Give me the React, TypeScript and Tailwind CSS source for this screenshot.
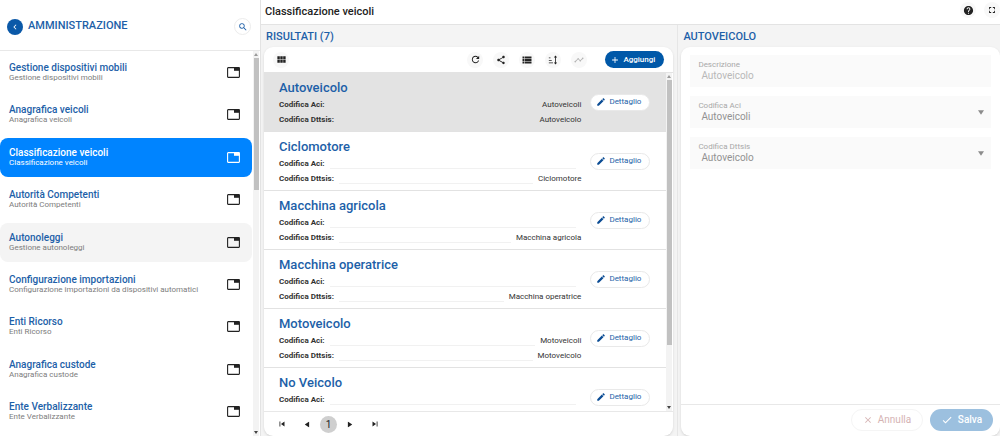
import { useState } from "react";
import type { ReactNode } from "react";
import {
  MdAdd,
  MdCheck,
  MdChevronLeft,
  MdClose,
  MdEdit,
  MdFullscreen,
  MdHelp,
  MdRefresh,
  MdSearch,
  MdShare,
  MdSkipNext,
  MdSkipPrevious,
  MdTimeline,
  MdViewList,
  MdViewModule,
} from "react-icons/md";

type MenuItem = { title: string; subtitle: string };
type Vehicle = { name: string; aci: string; dttsis?: string };

const menuItems: MenuItem[] = [
  { title: "Gestione dispositivi mobili", subtitle: "Gestione dispositivi mobili" },
  { title: "Anagrafica veicoli", subtitle: "Anagrafica veicoli" },
  { title: "Classificazione veicoli", subtitle: "Classificazione veicoli" },
  { title: "Autorità Competenti", subtitle: "Autorità Competenti" },
  { title: "Autonoleggi", subtitle: "Gestione autonoleggi" },
  {
    title: "Configurazione importazioni",
    subtitle: "Configurazione importazioni da dispositivi automatici",
  },
  { title: "Enti Ricorso", subtitle: "Enti Ricorso" },
  { title: "Anagrafica custode", subtitle: "Anagrafica custode" },
  { title: "Ente Verbalizzante", subtitle: "Ente Verbalizzante" },
];

const vehicles: Vehicle[] = [
  { name: "Autoveicolo", aci: "Autoveicoli", dttsis: "Autoveicolo" },
  { name: "Ciclomotore", aci: "", dttsis: "Ciclomotore" },
  { name: "Macchina agricola", aci: "", dttsis: "Macchina agricola" },
  { name: "Macchina operatrice", aci: "", dttsis: "Macchina operatrice" },
  { name: "Motoveicolo", aci: "Motoveicoli", dttsis: "Motoveicolo" },
  { name: "No Veicolo", aci: "" },
];

const Triangle = ({ className }: { className: string }) => (
  <svg viewBox="0 0 8 6" className={className} aria-hidden="true">
    <path d="M0 0h8L4 6z" fill="currentColor" />
  </svg>
);

const TabIcon = ({ className }: { className: string }) => (
  <svg viewBox="0 0 13 11" className={`w-[13px] h-[11px] ${className}`} aria-hidden="true">
    <rect x="0.6" y="0.6" width="11.8" height="9.8" rx="0.6" fill="none" stroke="currentColor" strokeWidth="1.1" />
    <path d="M7 0.6h5.4v3.2H7z" fill="currentColor" />
  </svg>
);

const SortIcon = () => (
  <svg viewBox="0 0 24 24" className="size-[10px]" aria-hidden="true">
    <path d="M2 6h4v2H2zM2 12h7v2H2zM2 18h10v2H2z" fill="currentColor" />
    <path d="M18 1l4 5h-3v12h3l-4 5-4-5h3V6h-3z" fill="currentColor" />
  </svg>
);

const RoundButton = ({
  label,
  disabled,
  children,
}: {
  label: string;
  disabled?: boolean;
  children: ReactNode;
}) => (
  <button
    aria-label={label}
    disabled={disabled}
    className="size-4 rounded-full bg-[#f8f8f8] flex items-center justify-center text-[#222] disabled:text-[#b5b5b5]"
  >
    {children}
  </button>
);

const ScrollTrack = ({ thumb }: { thumb: string }) => (
  <div className="w-[6px] shrink-0 bg-[#f3f3f3] flex flex-col items-center pt-[2px]">
    <Triangle className="w-1 h-[3px] shrink-0 rotate-180 text-[#9a9a9a]" />
    <div className={`w-[5px] mt-[2px] bg-[#c1c1c1] ${thumb}`} />
    <Triangle className="w-1 h-[3px] shrink-0 mt-auto mb-[2px] text-[#444]" />
  </div>
);

const Sidebar = () => {
  const [active, setActive] = useState("Classificazione veicoli");

  return (
    <aside className="w-[260px] shrink-0 h-full flex flex-col bg-white">
      <div className="h-[51px] shrink-0 pt-[3px] pl-[7px] pr-[9px] flex items-center border-b border-[#e8e8e8]">
        <button
          aria-label="Indietro"
          className="size-4 rounded-full bg-[#0b59a8] text-white flex items-center justify-center"
        >
          <MdChevronLeft className="size-[10px]" />
        </button>
        <h1 className="ml-[5px] text-[11px] font-medium text-[#1d5fa8]">AMMINISTRAZIONE</h1>
        <button
          aria-label="Cerca"
          className="ml-auto size-[17px] rounded-full border border-[#ececec] text-[#1d5fa8] flex items-center justify-center"
        >
          <MdSearch className="size-[10px]" />
        </button>
      </div>
      <div className="flex-1 min-h-0 flex">
        <nav className="flex-1 pt-[2px] pb-[5px] flex flex-col justify-between">
          {menuItems.map((item) => {
            const selected = item.title === active;
            return (
              <button
                key={item.title}
                onClick={() => setActive(item.title)}
                className={`h-[39px] mr-px pl-[9px] pr-3 rounded-lg flex items-center justify-between text-left ${
                  selected ? "bg-[#0084ff]" : item.title === "Autonoleggi" ? "bg-[#f4f4f4]" : ""
                }`}
              >
                <span className="flex flex-col">
                  <span
                    className={`text-[10px] leading-[11px] font-medium ${selected ? "text-white" : "text-[#1d5fa8]"}`}
                  >
                    {item.title}
                  </span>
                  <span
                    className={`text-[8px] leading-[10px] ${selected ? "text-white" : "text-[#7d7d7d]"}`}
                  >
                    {item.subtitle}
                  </span>
                </span>
                <TabIcon className={selected ? "text-white" : "text-[#222]"} />
              </button>
            );
          })}
        </nav>
        <ScrollTrack thumb="h-[132px]" />
        <div className="w-px" />
      </div>
    </aside>
  );
};

const VehicleField = ({ label, value }: { label: string; value: string }) => (
  <div className="h-[15px] flex items-center gap-[5px]">
    <dt className="text-[8px] font-bold text-[#333]">{label}:</dt>
    <div className="flex-1 h-[11px] border-b border-[#f1f1f1]" />
    <dd className="text-[8px] text-[#333]">{value}</dd>
  </div>
);

const VehicleRow = ({ vehicle, selected }: { vehicle: Vehicle; selected: boolean }) => (
  <li
    className={`h-[59px] shrink-0 pl-[15px] pr-4 flex border-b border-[#e2e2e2] ${
      selected ? "bg-[#e3e3e3]" : ""
    }`}
  >
    <div className={`flex-1 pt-[6px] ${selected ? "[&_div]:border-transparent" : ""}`}>
      <h3 className="text-[13px] leading-[18px] font-medium text-[#1d5fa8]">{vehicle.name}</h3>
      <dl>
        <VehicleField label="Codifica Aci" value={vehicle.aci} />
        {vehicle.dttsis !== undefined && (
          <VehicleField label="Codifica Dttsis" value={vehicle.dttsis} />
        )}
      </dl>
    </div>
    <button className="ml-[9px] self-center w-[60px] h-[17px] rounded-full bg-white border border-[#e9e9e9] flex items-center pl-[5px] gap-[3px] text-[8px] text-[#1d5fa8]">
      <MdEdit className="size-[10px] text-[#0b4c94]" />
      Dettaglio
    </button>
  </li>
);

const Results = () => (
  <section className="flex-[415_1_0%] pl-[3px] pr-1 flex flex-col min-h-0">
    <h2 className="h-[22px] shrink-0 px-[2px] pt-[2px] flex items-center text-[11px] font-medium text-[#1d5fa8]">
      RISULTATI (7)
    </h2>
    <div className="flex-1 min-h-0 flex flex-col bg-white rounded-[9px] overflow-hidden shadow-sm">
      <div className="h-[25px] shrink-0 px-[9px] flex items-center">
        <RoundButton label="Griglia">
          <MdViewModule className="size-[11px]" />
        </RoundButton>
        <div className="ml-auto mr-[18px] flex gap-[10px]">
          <RoundButton label="Aggiorna">
            <MdRefresh className="size-[11px]" />
          </RoundButton>
          <RoundButton label="Condividi">
            <MdShare className="size-[10px]" />
          </RoundButton>
          <RoundButton label="Elenco">
            <MdViewList className="size-3" />
          </RoundButton>
          <RoundButton label="Ordina">
            <SortIcon />
          </RoundButton>
          <RoundButton label="Grafico" disabled>
            <MdTimeline className="size-[10px]" />
          </RoundButton>
        </div>
        <button className="w-[59px] h-[17px] rounded-full bg-[#0058a8] text-white text-[8px] font-medium flex items-center pl-[5px] gap-[3px]">
          <MdAdd className="size-[10px]" />
          Aggiungi
        </button>
      </div>
      <div className="flex-1 min-h-0 flex border-t border-[#e3e3e3]">
        <ul className="flex-1 flex flex-col overflow-hidden">
          {vehicles.map((vehicle, i) => (
            <VehicleRow key={vehicle.name} vehicle={vehicle} selected={i === 0} />
          ))}
        </ul>
        <ScrollTrack thumb="h-[265px]" />
        <div className="w-px" />
      </div>
      <div className="h-[25px] shrink-0 pl-[13px] flex items-center border-t border-[#e8e8e8] text-[#222]">
        <button aria-label="Prima pagina">
          <MdSkipPrevious className="size-[10px]" />
        </button>
        <button aria-label="Pagina precedente" className="ml-[17px]">
          <Triangle className="w-[6px] h-[5px] rotate-90" />
        </button>
        <button className="ml-[10px] size-[17px] rounded-full bg-[#cfcfcf] text-[10px]">1</button>
        <button aria-label="Pagina successiva" className="ml-[10px]">
          <Triangle className="w-[6px] h-[5px] -rotate-90" />
        </button>
        <button aria-label="Ultima pagina" className="ml-[17px]">
          <MdSkipNext className="size-[10px]" />
        </button>
      </div>
    </div>
  </section>
);

const SelectField = ({ id, label, value }: { id: string; label: string; value: string }) => (
  <div className="h-8 pl-[8px] pr-[7px] bg-[#fafafa] flex items-center">
    <div className="flex-1 flex flex-col">
      <label htmlFor={id} className="text-[8px] leading-[10px] text-[#a8a8a8]">
        {label}
      </label>
      <select
        id={id}
        disabled
        defaultValue={value}
        className="appearance-none pl-[3px] text-[10px] leading-[12px] text-[#929292] opacity-100"
      >
        <option>{value}</option>
      </select>
    </div>
    <Triangle className="w-[6px] h-[5px] text-[#8c8c8c]" />
  </div>
);

const Detail = () => (
  <section className="flex-[323_1_0%] pl-[3px] border-l border-[#e6e6e6] flex flex-col min-h-0">
    <h2 className="h-[22px] shrink-0 px-[2px] pt-[2px] flex items-center text-[11px] font-medium text-[#1d5fa8]">
      AUTOVEICOLO
    </h2>
    <div className="flex-1 min-h-0 flex flex-col bg-white rounded-[9px] shadow-sm">
      <form className="flex-1 pt-2 px-[9px] flex flex-col gap-[9px]">
        <div className="h-8 px-[8px] bg-[#fafafa] flex flex-col justify-center">
          <label htmlFor="descrizione" className="text-[8px] leading-[10px] text-[#a8a8a8]">
            Descrizione
          </label>
          <input
            id="descrizione"
            disabled
            defaultValue="Autoveicolo"
            className="pl-[3px] text-[10px] leading-[12px] text-[#b8b8b8]"
          />
        </div>
        <SelectField id="aci" label="Codifica Aci" value="Autoveicoli" />
        <SelectField id="dttsis" label="Codifica Dttsis" value="Autoveicolo" />
      </form>
      <div className="h-8 shrink-0 pr-[7px] pb-[2px] flex items-center justify-end gap-[7px] border-t border-[#e8e8e8]">
        <button
          disabled
          className="w-[72px] h-[22px] rounded-full border border-[#f5f5f5] flex items-center justify-center gap-[5px] text-[10px] text-[#d5b3b3]"
        >
          <MdClose className="size-[10px]" />
          Annulla
        </button>
        <button
          disabled
          className="w-[63px] h-[22px] rounded-full bg-[#9cc0df] flex items-center justify-center gap-[5px] text-[10px] font-medium text-white"
        >
          <MdCheck className="size-3" />
          Salva
        </button>
      </div>
    </div>
  </section>
);

export default function App() {
  return (
    <div className="h-screen flex overflow-hidden bg-[#f4f4f4] font-['Roboto','Liberation_Sans',sans-serif]">
      <Sidebar />
      <main className="flex-1 min-w-0 flex flex-col border-l border-[#e3e3e3]">
        <header className="h-[25px] shrink-0 pl-[4px] flex items-center bg-white border-b border-[#e3e3e3]">
          <h1 className="text-[11px] font-medium text-[#222]">Classificazione veicoli</h1>
          <div className="ml-auto pb-1 flex gap-2">
            <RoundButton label="Aiuto">
              <MdHelp className="size-[11px]" />
            </RoundButton>
            <RoundButton label="Schermo intero">
              <MdFullscreen className="size-[10px]" />
            </RoundButton>
          </div>
        </header>
        <div className="flex-1 min-h-0 flex">
          <Results />
          <Detail />
        </div>
      </main>
    </div>
  );
}
